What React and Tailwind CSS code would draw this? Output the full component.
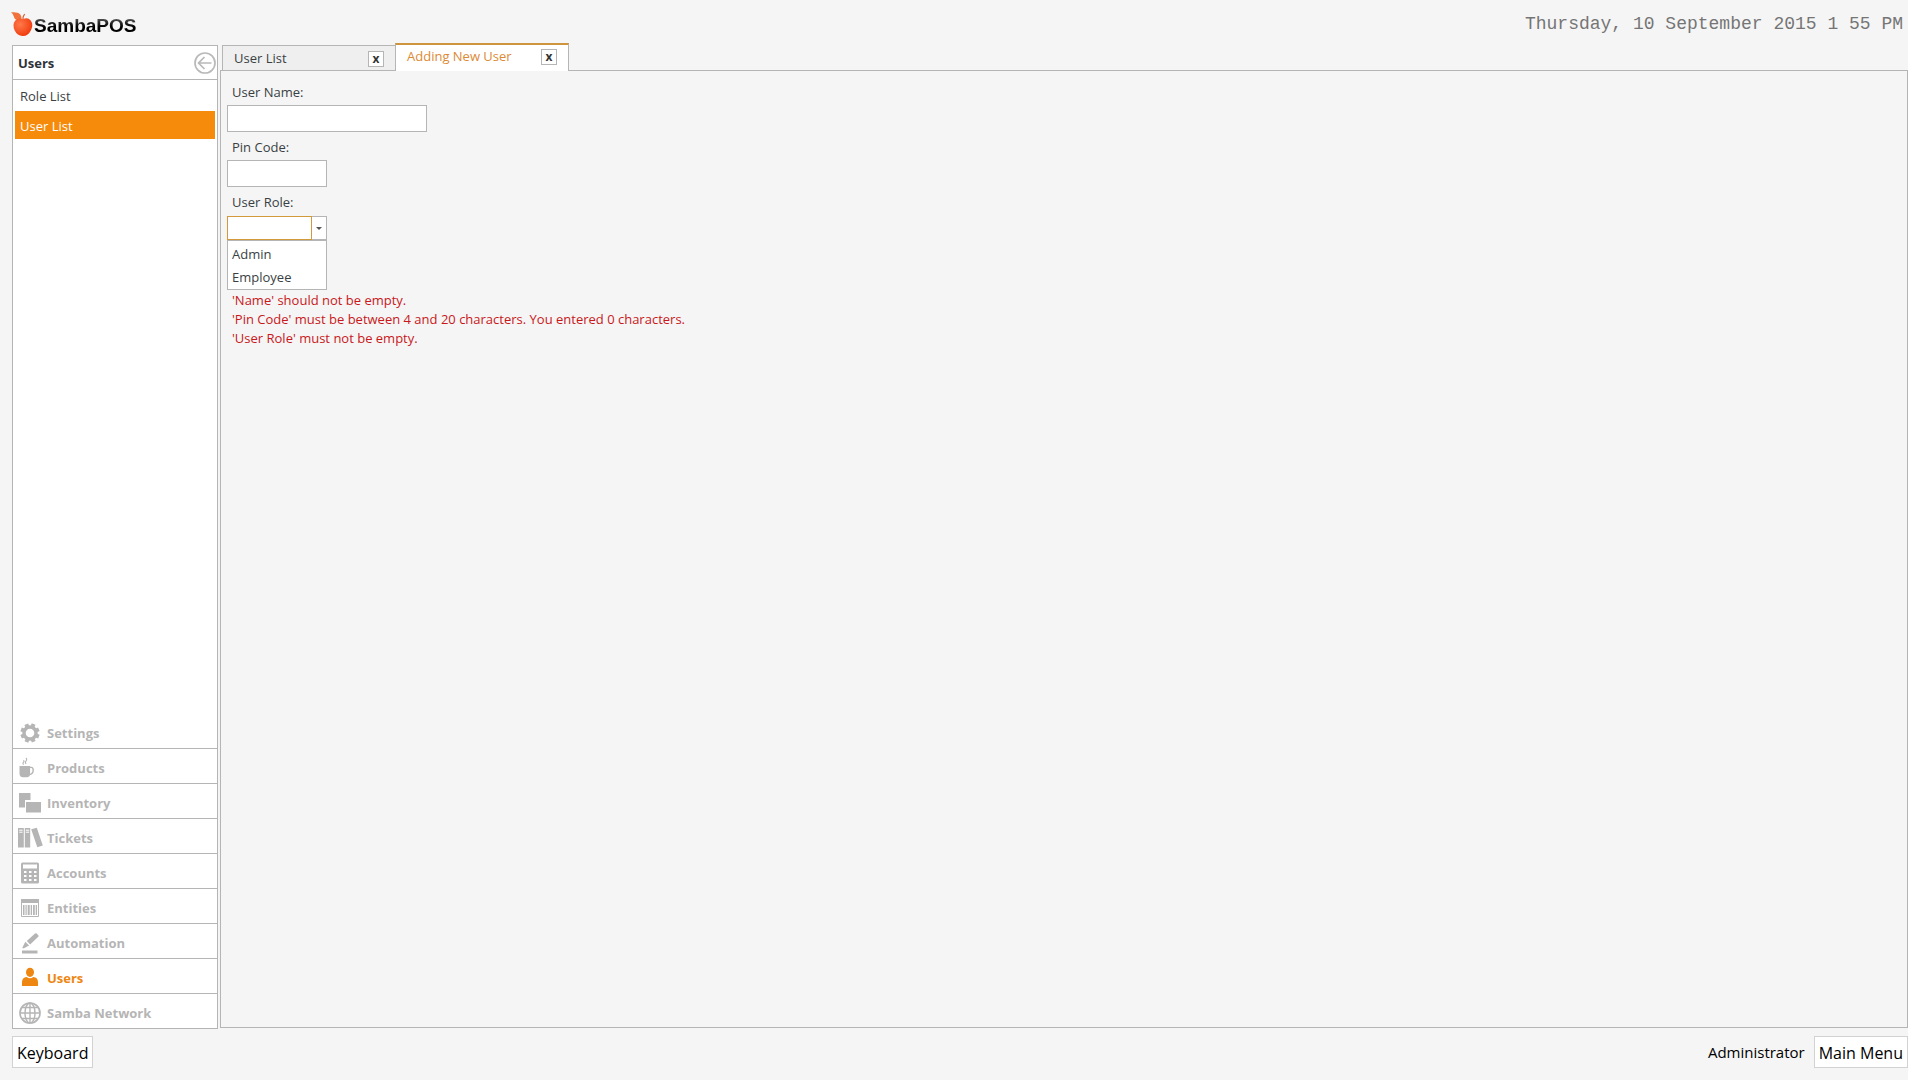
import { useState } from 'react'

const NAV_ITEMS = ['Settings', 'Products', 'Inventory', 'Tickets', 'Accounts', 'Entities', 'Automation', 'Users', 'Samba Network']

const ROLES = ['Admin', 'Employee']

const ERRORS = [
    "'Name' should not be empty.",
    "'Pin Code' must be between 4 and 20 characters. You entered 0 characters.",
    "'User Role' must not be empty."
]

const ICONS = {
    Settings: (
        <>
            <circle cx="12" cy="12" r="6" fill="none" stroke="currentColor" strokeWidth="3.4" />
            {[22, 67, 112, 157, 202, 247, 292, 337].map((angle) => (
                <path key={angle} d="M10 2.4h4v4h-4z" transform={`rotate(${angle} 12 12)`} />
            ))}
        </>
    ),
    Products: (
        <>
            <path d="M1.5 10h10.6v7.2q0 4-3.4 4H5q-3.5 0-3.5-4z" />
            <path d="M12 11.4h1.3q1.9 0 1.9 2.8 0 3.8-4.2 4.6" fill="none" stroke="currentColor" strokeWidth="1.4" />
            <path d="M5.5 8.8q-1-1.5 0-2.6t0-2M8 8q-1.2-1.9.1-3.2T7.9 2" fill="none" stroke="currentColor" strokeWidth="1.1" />
        </>
    ),
    Inventory: <path d="M1 2h11.500v7H7v7.500H1zM8 11h15v10.500H8z" />,
    Tickets: (
        <>
            <path d="M0 2h5.800v19.500H0zM6.800 2h5.400v19.500H6.800zM13.200 3.300l5.600-1.600 6 17.800-5.500 1.700z" />
            <path d="M1.200 4.200h3.400M1.200 6.200h3.400M7.800 4.200h3.400M7.800 6.200h3.400" stroke="white" strokeWidth="1" />
        </>
    ),
    Accounts: (
        <>
            <rect x="3" y="1.500" width="18" height="21" rx="1.500" />
            <path fill="white" d="M5 3.500h14v4H5zM6 10h2.500v2H6zM11 10h2.500v2H11zM16 10h2.500v2H16zM6 14h2.500v2H6zM11 14h2.500v2H11zM16 14h2.500v2H16zM6 18h2.500v2H6zM11 18h2.500v2H11zM16 18h2.500v2H16z" />
        </>
    ),
    Entities: (
        <>
            <path d="M3.500 3.500h17v17h-17z" fill="none" stroke="currentColor" />
            <path d="M3 3h18v4H3zM5 9h1.500v10H5zM7.500 9h1.200v10H7.500zM9.700 9h2v10h-2zM12.700 9h1.300v10h-1.300zM15 9h1.800v10H15zM17.700 9h1.300v10h-1.300z" />
        </>
    ),
    Automation: <path d="M4 19.500h15.500v3H4zM4.300 16.800l3-6 3.800 3.800-5.600 2.800zM8.800 10l8.200-7.400q.8-.7 1.600 0l1.700 1.600q.7.8 0 1.600l-8.200 7.600z" />,
    Users: (
        <>
            <ellipse cx="12" cy="6.300" rx="4" ry="4.600" />
            <path d="M4 20v-3.800q0-4.600 4.700-5.200Q12 13.600 15.300 11q4.700.6 4.700 5.200V20z" />
        </>
    ),
    'Samba Network': (
        <g fill="none" stroke="currentColor" strokeWidth="1.400">
            <circle cx="12" cy="12" r="10" strokeWidth="1.700" />
            <ellipse cx="12" cy="12" rx="5" ry="10" />
            <path d="M12 2v20M2 12h20M4 6.500h16M4 17.500h16" />
        </g>
    )
}

function Logo() {
    return (
        <div className="flex items-center">
            <svg viewBox="0 0 23 25" className="h-[25px] w-[23px]" aria-hidden="true">
                <defs>
                    <radialGradient id="fruit" cx="35%" cy="35%" r="70%">
                        <stop offset="0" stopColor="#ff7a4a" />
                        <stop offset="1" stopColor="#f03a0c" />
                    </radialGradient>
                </defs>
                <path d="M0 .3q7-.6 9.300 2.200Q11 5 10.400 8 4 9 3 5 2.500 2 0 .3z" fill="#f0713c" />
                <path d="M12 8q-.4-3.400 1.600-6" fill="none" stroke="#d9562e" strokeWidth="1.200" />
                <path d="M12 7.300Q16.500 4.600 19.700 8.400q3 4.200.4 9.600-3 6.200-8.400 6-5.200.2-8-5.400-2.600-5.800.4-9.800Q7.500 5 12 7.300z" fill="url(#fruit)" />
            </svg>
            <span className="bg-linear-to-b from-[#555555] from-30% to-black to-70% bg-clip-text pt-1 font-['Liberation_Sans',sans-serif] text-[19px] leading-6 font-bold text-transparent">
                SambaPOS
            </span>
        </div>
    )
}

function Sidebar() {
    const [page, setPage] = useState('User List')
    const [section, setSection] = useState('Users')

    return (
        <aside className="flex w-[206px] shrink-0 flex-col border-x border-t border-[#b5b5b5] bg-white">
            <div className="flex h-[34px] items-center justify-between border-b border-[#b5b5b5] pl-[5px]">
                <h2 className="pt-[2px] text-[13px] font-bold text-[#2d3338]">Users</h2>
                <button type="button" aria-label="Back" className="text-[#b9b9b9]">
                    <svg viewBox="0 0 24 24" className="size-6" fill="none" stroke="currentColor" strokeWidth="1.700">
                        <circle cx="12" cy="12" r="10" />
                        <path d="M18.500 12H6M11.500 6 5.500 12l6 6" />
                    </svg>
                </button>
            </div>

            <ul className="flex flex-1 flex-col gap-[2px] px-[2px] pt-px">
                {['Role List', 'User List'].map((item) => (
                    <li key={item}>
                        <button
                            type="button"
                            onClick={() => setPage(item)}
                            className={`h-7 w-full px-[5px] pt-[3px] text-left ${page === item ? 'bg-[#f68b0b] text-white' : ''}`}
                        >
                            {item}
                        </button>
                    </li>
                ))}
            </ul>

            <nav>
                {NAV_ITEMS.map((item) => (
                    <button
                        key={item}
                        type="button"
                        onClick={() => setSection(item)}
                        className={`flex h-[35px] w-full items-center gap-[5px] border-b border-[#b5b5b5] px-[5px] pt-1 font-bold ${section === item ? 'text-[#ee8612]' : 'text-[#b5b5b5]'}`}
                    >
                        <svg viewBox="0 0 24 24" className="size-6 shrink-0 overflow-visible" fill="currentColor" aria-hidden="true">
                            {ICONS[item]}
                        </svg>
                        <span className="pt-[2px]">{item}</span>
                    </button>
                ))}
            </nav>
        </aside>
    )
}

function Tab({ title, active, onSelect }) {
    return (
        <div
            className={`flex items-center justify-between border-[#b5b5b5] pr-[11px] pl-[11px] ${
                active
                    ? '-mb-px h-7 w-[174px] border-x border-t-2 border-t-[#cf9440] bg-white pb-[2px] text-[#dd8a35]'
                    : 'h-[25px] w-[173px] border-t border-l bg-[#efefef] pt-[2px]'
            }`}
        >
            <button type="button" role="tab" aria-selected={active} onClick={onSelect}>
                {title}
            </button>
            <button
                type="button"
                aria-label={`Close ${title}`}
                className="flex size-4 items-center justify-center border border-[#b5b5b5] bg-white pb-px text-xs leading-3 font-bold text-[#333333]"
            >
                x
            </button>
        </div>
    )
}

function UserForm() {
    const [name, setName] = useState('')
    const [pin, setPin] = useState('')
    const [role, setRole] = useState('')
    const [open, setOpen] = useState(true)

    const pickRole = (value) => {
        setRole(value)
        setOpen(false)
    }

    return (
        <form className="flex flex-col items-start px-[6px] pt-[6px]" onSubmit={(e) => e.preventDefault()}>
            <label htmlFor="name" className="px-[5px] pt-[2px] leading-[26px]">User Name:</label>
            <input
                id="name"
                value={name}
                onChange={(e) => setName(e.target.value)}
                className="h-[27px] w-[200px] border border-[#b5b5b5] bg-white px-1 outline-none"
            />

            <label htmlFor="pin" className="px-[5px] pt-[2px] leading-[26px]">Pin Code:</label>
            <input
                id="pin"
                value={pin}
                onChange={(e) => setPin(e.target.value)}
                className="h-[27px] w-[100px] border border-[#b5b5b5] bg-white px-1 outline-none"
            />

            <label htmlFor="role" className="px-[5px] pt-[2px] pb-px leading-[26px]">User Role:</label>
            <div className="relative w-[100px]">
                <div className="flex h-6">
                    <select
                        id="role"
                        value={role}
                        onChange={(e) => pickRole(e.target.value)}
                        className="min-w-0 flex-1 appearance-none border border-[#d39a3c] bg-white px-1 outline-none"
                    >
                        <option value="" />
                        {ROLES.map((item) => <option key={item}>{item}</option>)}
                    </select>
                    <button
                        type="button"
                        aria-label="Show roles"
                        onClick={() => setOpen(!open)}
                        className="flex w-[15px] items-center justify-center border-y border-r border-[#b5b5b5] bg-white"
                    >
                        <svg viewBox="0 0 6 3" className="h-[3px] w-[6px]" fill="#555555">
                            <path d="M0 0h6L3 3z" />
                        </svg>
                    </button>
                </div>
                {open && (
                    <ul role="listbox" aria-label="Roles" className="absolute inset-x-0 top-full border border-[#b5b5b5] bg-white pt-[2px]">
                        {ROLES.map((item) => (
                            <li
                                key={item}
                                role="option"
                                aria-selected={role === item}
                                onClick={() => pickRole(item)}
                                className="px-1 leading-[23px]"
                            >
                                {item}
                            </li>
                        ))}
                    </ul>
                )}
            </div>

            <div role="alert" className="mt-[51px] px-[5px] leading-[19px] text-[#c8181a]">
                {ERRORS.map((error) => <p key={error}>{error}</p>)}
            </div>
        </form>
    )
}

export default function App() {
    const [tab, setTab] = useState('Adding New User')

    return (
        <div className="flex min-h-screen flex-col bg-[#f5f5f5] font-['Open_Sans','Noto_Sans',sans-serif] text-[13px] text-[#3a3f44]">
            <header className="flex h-[45px] items-center justify-between pt-[3px] pr-[5px] pl-[11px]">
                <Logo />
                <time className="font-['Liberation_Mono',monospace] text-lg text-[#757575]">
                    Thursday, 10 September 2015 1 55 PM
                </time>
            </header>

            <div className="flex flex-1 gap-[2px] pl-3">
                <Sidebar />
                <main className="-mt-[2px] mb-px flex min-w-0 flex-1 flex-col">
                    <div role="tablist" className="relative flex items-end pl-[2px]">
                        {['User List', 'Adding New User'].map((title) => (
                            <Tab key={title} title={title} active={tab === title} onSelect={() => setTab(title)} />
                        ))}
                    </div>
                    <section className="flex-1 border border-[#b5b5b5]">
                        <UserForm />
                    </section>
                </main>
            </div>

            <footer className="flex h-[51px] items-start justify-between pt-[7px] pl-3 text-base text-black">
                <button type="button" className="h-8 border border-[#d2d2d2] bg-white px-1 pt-[2px]">Keyboard</button>
                <div className="flex items-center gap-[9px]">
                    <span className="pt-px text-[15px]">Administrator</span>
                    <button type="button" className="h-8 border border-[#d2d2d2] bg-white px-1 pt-[2px]">Main Menu</button>
                </div>
            </footer>
        </div>
    )
}
